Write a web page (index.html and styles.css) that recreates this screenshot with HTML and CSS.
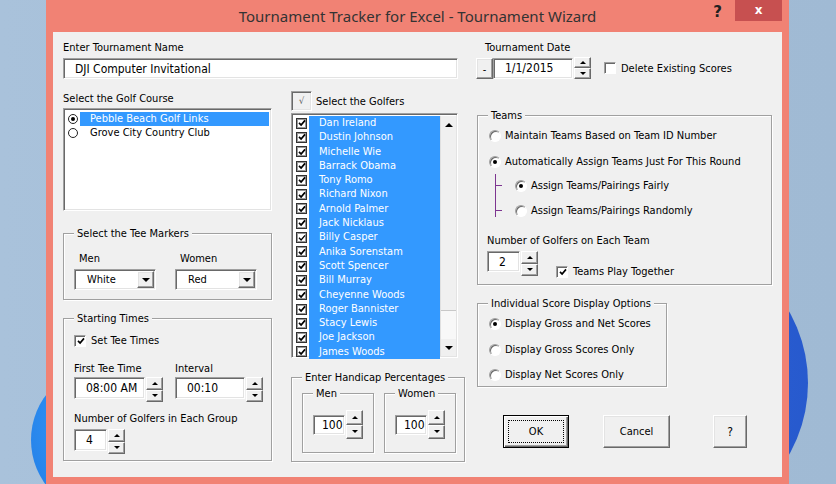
FILE: index.html
```html
<!DOCTYPE html>
<html lang="en">
<head>
  <meta charset="UTF-8" />
  <title>Tournament Wizard</title>
  <link rel="stylesheet" href="styles.css">
</head>
<body>
  <div class="desktop">
    <div class="orb orb-left"></div>
    <div class="orb orb-right"></div>

    <div class="window">
      <div class="titlebar">
        <span class="title">Tournament Tracker for Excel - Tournament Wizard</span>
        <div class="title-controls">
          <span class="title-help">?</span>
          <span class="title-close">x</span>
        </div>
      </div>

      <div class="client">
        <div class="top-row">
          <div class="name-block">
            <div class="label">Enter Tournament Name</div>
            <div class="textbox name-box">DJI Computer Invitational</div>
          </div>
          <div class="date-block">
            <div class="label date-label">Tournament Date</div>
            <div class="date-row">
              <div class="raised dash-btn">-</div>
              <div class="textbox date-box">1/1/2015</div>
              <div class="spin date-spin"><span class="up"></span><span class="down"></span></div>
              <div class="check date-check"><span class="box"></span><span class="label">Delete Existing Scores</span></div>
            </div>
          </div>
        </div>

        <div class="main">
          <!-- left column -->
          <div class="col col-left">
            <div class="label course-label">Select the Golf Course</div>
            <div class="sunken course-list">
              <div class="course-item"><span class="dot-radio on"></span><span class="course-name selected">Pebble Beach Golf Links</span></div>
              <div class="course-item"><span class="dot-radio"></span><span class="course-name">Grove City Country Club</span></div>
            </div>

            <div class="group tee-group">
              <span class="legend">Select the Tee Markers</span>
              <div class="tee-row">
                <div class="tee-col">
                  <div class="label tee-label">Men</div>
                  <div class="textbox combo">White<span class="raised combo-btn"></span></div>
                </div>
                <div class="tee-col">
                  <div class="label tee-label">Women</div>
                  <div class="textbox combo">Red<span class="raised combo-btn"></span></div>
                </div>
              </div>
            </div>

            <div class="group start-group">
              <span class="legend">Starting Times</span>
              <div class="check tee-check"><span class="box"><svg viewBox="0 0 8 8" width="8" height="8"><path d="M1 3.8 L3.1 6 L7 1.4" fill="none" stroke="#000" stroke-width="1.7"/></svg></span><span class="label">Set Tee Times</span></div>
              <div class="time-row">
                <div class="time-col">
                  <div class="label">First Tee Time</div>
                  <div class="field-row">
                    <div class="textbox time-box">08:00 AM</div>
                    <div class="spin"><span class="up"></span><span class="down"></span></div>
                  </div>
                </div>
                <div class="time-col interval-col">
                  <div class="label">Interval</div>
                  <div class="field-row">
                    <div class="textbox interval-box">00:10</div>
                    <div class="spin"><span class="up"></span><span class="down"></span></div>
                  </div>
                </div>
              </div>
              <div class="label group-size-label">Number of Golfers in Each Group</div>
              <div class="field-row group-size-row">
                <div class="textbox small-box">4</div>
                <div class="spin"><span class="up"></span><span class="down"></span></div>
              </div>
            </div>
          </div>

          <!-- middle column -->
          <div class="col col-mid">
            <div class="golfer-head">
              <div class="sunken all-box">√</div>
              <span class="label">Select the Golfers</span>
            </div>
            <div class="sunken golfer-list">
              <div class="golfer-items">
                <div class="golfer"><span class="flat-check"><svg viewBox="0 0 8 8" width="8" height="8"><path d="M1 3.8 L3.1 6 L7 1.4" fill="none" stroke="#000" stroke-width="1.7"/></svg></span><span class="golfer-name">Dan Ireland</span></div>
                <div class="golfer"><span class="flat-check"><svg viewBox="0 0 8 8" width="8" height="8"><path d="M1 3.8 L3.1 6 L7 1.4" fill="none" stroke="#000" stroke-width="1.7"/></svg></span><span class="golfer-name">Dustin Johnson</span></div>
                <div class="golfer"><span class="flat-check"><svg viewBox="0 0 8 8" width="8" height="8"><path d="M1 3.8 L3.1 6 L7 1.4" fill="none" stroke="#000" stroke-width="1.7"/></svg></span><span class="golfer-name">Michelle Wie</span></div>
                <div class="golfer"><span class="flat-check"><svg viewBox="0 0 8 8" width="8" height="8"><path d="M1 3.8 L3.1 6 L7 1.4" fill="none" stroke="#000" stroke-width="1.7"/></svg></span><span class="golfer-name">Barrack Obama</span></div>
                <div class="golfer"><span class="flat-check"><svg viewBox="0 0 8 8" width="8" height="8"><path d="M1 3.8 L3.1 6 L7 1.4" fill="none" stroke="#000" stroke-width="1.7"/></svg></span><span class="golfer-name">Tony Romo</span></div>
                <div class="golfer"><span class="flat-check"><svg viewBox="0 0 8 8" width="8" height="8"><path d="M1 3.8 L3.1 6 L7 1.4" fill="none" stroke="#000" stroke-width="1.7"/></svg></span><span class="golfer-name">Richard Nixon</span></div>
                <div class="golfer"><span class="flat-check"><svg viewBox="0 0 8 8" width="8" height="8"><path d="M1 3.8 L3.1 6 L7 1.4" fill="none" stroke="#000" stroke-width="1.7"/></svg></span><span class="golfer-name">Arnold Palmer</span></div>
                <div class="golfer"><span class="flat-check"><svg viewBox="0 0 8 8" width="8" height="8"><path d="M1 3.8 L3.1 6 L7 1.4" fill="none" stroke="#000" stroke-width="1.7"/></svg></span><span class="golfer-name">Jack Nicklaus</span></div>
                <div class="golfer"><span class="flat-check"><svg viewBox="0 0 8 8" width="8" height="8"><path d="M1 3.8 L3.1 6 L7 1.4" fill="none" stroke="#000" stroke-width="1.3"/></svg></span><span class="golfer-name">Billy Casper</span></div>
                <div class="golfer"><span class="flat-check"><svg viewBox="0 0 8 8" width="8" height="8"><path d="M1 3.8 L3.1 6 L7 1.4" fill="none" stroke="#000" stroke-width="1.7"/></svg></span><span class="golfer-name">Anika Sorenstam</span></div>
                <div class="golfer"><span class="flat-check"><svg viewBox="0 0 8 8" width="8" height="8"><path d="M1 3.8 L3.1 6 L7 1.4" fill="none" stroke="#000" stroke-width="1.7"/></svg></span><span class="golfer-name">Scott Spencer</span></div>
                <div class="golfer"><span class="flat-check"><svg viewBox="0 0 8 8" width="8" height="8"><path d="M1 3.8 L3.1 6 L7 1.4" fill="none" stroke="#000" stroke-width="1.7"/></svg></span><span class="golfer-name">Bill Murray</span></div>
                <div class="golfer"><span class="flat-check"><svg viewBox="0 0 8 8" width="8" height="8"><path d="M1 3.8 L3.1 6 L7 1.4" fill="none" stroke="#000" stroke-width="1.7"/></svg></span><span class="golfer-name">Cheyenne Woods</span></div>
                <div class="golfer"><span class="flat-check"><svg viewBox="0 0 8 8" width="8" height="8"><path d="M1 3.8 L3.1 6 L7 1.4" fill="none" stroke="#000" stroke-width="1.7"/></svg></span><span class="golfer-name">Roger Bannister</span></div>
                <div class="golfer"><span class="flat-check"><svg viewBox="0 0 8 8" width="8" height="8"><path d="M1 3.8 L3.1 6 L7 1.4" fill="none" stroke="#000" stroke-width="1.7"/></svg></span><span class="golfer-name">Stacy Lewis</span></div>
                <div class="golfer"><span class="flat-check"><svg viewBox="0 0 8 8" width="8" height="8"><path d="M1 3.8 L3.1 6 L7 1.4" fill="none" stroke="#000" stroke-width="1.7"/></svg></span><span class="golfer-name">Joe Jackson</span></div>
                <div class="golfer"><span class="flat-check"><svg viewBox="0 0 8 8" width="8" height="8"><path d="M1 3.8 L3.1 6 L7 1.4" fill="none" stroke="#000" stroke-width="1.7"/></svg></span><span class="golfer-name">James Woods</span></div>
              </div>
              <div class="scrollbar">
                <span class="sb-btn sb-up"></span>
                <span class="sb-thumb"></span>
                <span class="sb-track"></span>
                <span class="sb-btn sb-down"></span>
              </div>
            </div>

            <div class="group hc-group">
              <span class="legend">Enter Handicap Percentages</span>
              <div class="hc-row">
                <div class="group hc-sub">
                  <span class="legend">Men</span>
                  <div class="field-row hc-field">
                    <div class="textbox hc-box">100</div>
                    <div class="spin tall-spin"><span class="up"></span><span class="down"></span></div>
                  </div>
                </div>
                <div class="group hc-sub">
                  <span class="legend">Women</span>
                  <div class="field-row hc-field">
                    <div class="textbox hc-box">100</div>
                    <div class="spin tall-spin"><span class="up"></span><span class="down"></span></div>
                  </div>
                </div>
              </div>
            </div>
          </div>

          <!-- right column -->
          <div class="col col-right">
            <div class="group teams-group">
              <span class="legend">Teams</span>
              <div class="opt first-opt"><span class="radio"></span><span class="label">Maintain Teams Based on Team ID Number</span></div>
              <div class="opt"><span class="radio on"></span><span class="label">Automatically Assign Teams Just For This Round</span></div>
              <div class="sub-opts">
                <div class="opt sub-opt"><span class="radio on"></span><span class="label">Assign Teams/Pairings Fairly</span></div>
                <div class="opt sub-opt"><span class="radio"></span><span class="label">Assign Teams/Pairings Randomly</span></div>
              </div>
              <div class="label team-size-label">Number of Golfers on Each Team</div>
              <div class="field-row team-size-row">
                <div class="textbox small-box">2</div>
                <div class="spin"><span class="up"></span><span class="down"></span></div>
                <div class="check together-check"><span class="box"><svg viewBox="0 0 8 8" width="8" height="8"><path d="M1 3.8 L3.1 6 L7 1.4" fill="none" stroke="#000" stroke-width="1.7"/></svg></span><span class="label">Teams Play Together</span></div>
              </div>
            </div>

            <div class="group score-group">
              <span class="legend">Individual Score Display Options</span>
              <div class="opt first-opt"><span class="radio on"></span><span class="label">Display Gross and Net Scores</span></div>
              <div class="opt"><span class="radio"></span><span class="label">Display Gross Scores Only</span></div>
              <div class="opt"><span class="radio"></span><span class="label">Display Net Scores Only</span></div>
            </div>

            <div class="button-row">
              <div class="btn default-btn"><span class="focus">OK</span></div>
              <div class="btn cancel-btn">Cancel</div>
              <div class="btn help-btn">?</div>
            </div>
          </div>
        </div>
      </div>
    </div>
  </div>
</body>
</html>
```

FILE: styles.css
```css
* {
  box-sizing: border-box;
}

body {
  margin: 0;
  font-family: "DejaVu Sans Condensed", "DejaVu Sans", sans-serif;
  font-size: 11px;
  color: #000;
}

.desktop {
  position: relative;
  width: 836px;
  height: 484px;
  overflow: hidden;
  background: linear-gradient(90deg, #a9c2db 0%, #a3bdd7 50%, #a0bad4 100%);
}

.orb {
  position: absolute;
  border-radius: 50%;
}

.orb-left {
  left: 31px;
  top: 365px;
  width: 150px;
  height: 150px;
  background: radial-gradient(circle at 60% 40%, #55adf8 0%, #2b8bef 60%, #1f78e2 100%);
}

.orb-right {
  left: 516px;
  top: 237px;
  width: 292px;
  height: 292px;
  background: radial-gradient(circle, #2d62d6 0%, #2658cc 86%, #1c46ad 93%, #2152c4 100%);
}

/* window frame */
.window {
  position: absolute;
  left: 46px;
  top: 0;
  width: 743px;
  height: 484px;
  background: #f18274;
  padding: 0 7px 7px;
}

.titlebar {
  height: 32px;
  display: grid;
  grid-template-columns: 1fr auto 1fr;
  align-items: start;
}

.title {
  grid-column: 2;
  font-family: "Noto Sans", "Open Sans", sans-serif;
  font-size: 15px;
  line-height: 32px;
  color: #333;
  white-space: nowrap;
}

.title-controls {
  grid-column: 3;
  justify-self: end;
  display: flex;
  align-items: flex-start;
}

.title-help {
  font-family: "DejaVu Sans", sans-serif;
  font-weight: bold;
  font-size: 15px;
  line-height: 24px;
  color: #222;
  margin-right: 13px;
}

.title-close {
  width: 47px;
  height: 21px;
  background: #c75050;
  color: #fff;
  text-align: center;
  font-family: "DejaVu Sans", sans-serif;
  font-weight: bold;
  font-size: 12px;
  line-height: 20px;
}

/* client area */
.client {
  height: 445px;
  background: #f0f0f0;
  padding: 9px 10px 0;
}

.label {
  line-height: 13px;
  white-space: nowrap;
}

.sunken,
.textbox {
  background: #fff;
  border: 1px solid;
  border-color: #a0a0a0 #fff #fff #a0a0a0;
  box-shadow: inset 1px 1px 0 #696969, inset -1px -1px 0 #e3e3e3;
}

.raised {
  background: #f0f0f0;
  border: 1px solid;
  border-color: #fff #696969 #696969 #fff;
  box-shadow: inset -1px -1px 0 #a0a0a0, inset 1px 1px 0 #e3e3e3;
}

.textbox {
  display: flex;
  align-items: center;
  padding-left: 11px;
  font-size: 12px;
  white-space: nowrap;
}

/* top row */
.top-row {
  display: flex;
  align-items: flex-start;
}

.name-block {
  width: 395px;
}

.name-box {
  margin-top: 4px;
  height: 21px;
}

.date-block {
  margin-left: 18px;
}

.date-label {
  padding-left: 9px;
}

.date-row {
  display: flex;
  align-items: center;
  margin-top: 3px;
}

.dash-btn {
  width: 17px;
  height: 21px;
  display: flex;
  align-items: center;
  justify-content: center;
  font-size: 11px;
  padding-top: 3px;
}

.date-box {
  width: 80px;
  height: 21px;
}

.date-spin {
  height: 22px !important;
}

.date-check {
  margin-left: 13px;
}

/* spinners */
.spin {
  display: flex;
  flex-direction: column;
  width: 17px;
  height: 25px;
  margin-left: 1px;
}

.spin span {
  flex: 1;
  display: flex;
  align-items: center;
  justify-content: center;
  background: #f0f0f0;
  border: 1px solid;
  border-color: #fff #696969 #696969 #fff;
  box-shadow: inset -1px -1px 0 #a0a0a0;
}

.spin .up::after {
  content: "";
  border-left: 3px solid transparent;
  border-right: 3px solid transparent;
  border-bottom: 3px solid #000;
}

.spin .down::after {
  content: "";
  border-left: 3px solid transparent;
  border-right: 3px solid transparent;
  border-top: 3px solid #000;
}

.tall-spin {
  height: 29px;
}

.field-row {
  display: flex;
  align-items: flex-start;
}

/* 3d checkbox */
.check {
  display: flex;
  align-items: center;
}

.check .box {
  width: 12px;
  height: 12px;
  background: #fff;
  border: 1px solid;
  border-color: #a0a0a0 #fff #fff #a0a0a0;
  box-shadow: inset 1px 1px 0 #696969;
  display: flex;
  align-items: center;
  justify-content: center;
  padding: 1px 0 0 1px;
}

.check .label {
  margin-left: 5px;
}

/* group boxes */
.group {
  border: 1px solid #a0a0a0;
  box-shadow: inset 1px 1px 0 #fff, 1px 1px 0 #fff;
  padding: 0 10px;
}

.legend {
  display: block;
  width: fit-content;
  margin-top: -7px;
  padding: 0 3px;
  background: #f0f0f0;
  line-height: 13px;
  white-space: nowrap;
}

.main {
  display: flex;
  align-items: flex-start;
  margin-top: 12px;
}

/* left column */
.col-left {
  width: 209px;
}

.course-label {
  margin-top: 1px;
}

.course-list {
  margin-top: 3px;
  height: 103px;
  padding: 3px 2px 0 4px;
}

.course-item {
  display: flex;
  align-items: center;
  height: 14px;
}

.dot-radio {
  width: 10px;
  height: 10px;
  border: 1px solid #222;
  border-radius: 50%;
  background: #fff;
  display: flex;
  align-items: center;
  justify-content: center;
}

.dot-radio.on::after {
  content: "";
  width: 4px;
  height: 4px;
  border-radius: 50%;
  background: #000;
}

.course-name {
  flex: 1;
  margin-left: 2px;
  padding-left: 10px;
  line-height: 14px;
  white-space: nowrap;
}

.course-name.selected {
  background: #3399ff;
  color: #fff;
}

.tee-group {
  margin-top: 22px;
  padding-bottom: 9px;
}

.tee-row {
  display: flex;
  margin-top: 12px;
}

.tee-col {
  width: 82px;
}

.tee-col + .tee-col {
  margin-left: 19px;
}

.tee-label {
  padding-left: 5px;
}

.combo {
  margin-top: 4px;
  height: 21px;
  padding-left: 12px;
  padding-right: 1px;
  font-size: 11px;
}

.combo-btn {
  margin-left: auto;
  width: 17px;
  height: 17px;
  display: flex;
  align-items: center;
  justify-content: center;
}

.combo-btn::after {
  content: "";
  border-left: 4px solid transparent;
  border-right: 4px solid transparent;
  border-top: 4px solid #000;
}

.start-group {
  margin-top: 18px;
  padding-bottom: 6px;
}

.tee-check {
  margin-top: 9px;
}

.time-row {
  display: flex;
  margin-top: 15px;
}

.time-col .field-row {
  margin-top: 2px;
}

.interval-col {
  margin-left: 12px;
}

.time-box {
  width: 71px;
  height: 22px;
}

.interval-box {
  width: 70px;
  height: 22px;
}

.group-size-label {
  margin-top: 10px;
}

.group-size-row {
  margin-top: 4px;
}

.small-box {
  width: 33px;
  height: 22px;
}

/* middle column */
.col-mid {
  width: 174px;
  margin-left: 19px;
}

.golfer-head {
  display: flex;
  align-items: center;
  height: 20px;
}

.all-box {
  width: 21px;
  height: 20px;
  display: flex;
  align-items: center;
  justify-content: center;
  font-size: 9px;
  color: #555;
  background: #f0f0f0;
}

.golfer-head .label {
  margin-left: 4px;
}

.golfer-list {
  margin-top: 2px;
  width: 167px;
  height: 245px;
  display: flex;
  padding: 2px 1px 1px 2px;
}

.golfer-items {
  flex: 1;
}

.golfer {
  display: flex;
  align-items: center;
  height: 14.3px;
}

.flat-check {
  width: 11px;
  height: 11px;
  margin-left: 2px;
  border: 1px solid #333;
  box-shadow: inset 0 0 0 1px #9a9a9a;
  background: #fff;
  display: flex;
  align-items: center;
  justify-content: center;
}

.golfer-name {
  flex: 1;
  height: 100%;
  margin-left: 2px;
  padding-left: 10px;
  background: #3399ff;
  color: #fff;
  line-height: 14.3px;
  white-space: nowrap;
}

.scrollbar {
  width: 16px;
  display: flex;
  flex-direction: column;
  background: #f0f0f0;
  border-left: 1px solid #e0e0e0;
}

.sb-btn {
  height: 17px;
  display: flex;
  align-items: center;
  justify-content: center;
}

.sb-up::after {
  content: "";
  border-left: 4px solid transparent;
  border-right: 4px solid transparent;
  border-bottom: 4px solid #000;
}

.sb-down::after {
  content: "";
  border-left: 4px solid transparent;
  border-right: 4px solid transparent;
  border-top: 4px solid #000;
}

.sb-thumb {
  height: 178px;
  border-bottom: 1px solid #c8c8c8;
}

.sb-track {
  flex: 1;
  background: #f8f8f8;
}

.hc-group {
  margin-top: 19px;
  padding-bottom: 8px;
}

.hc-row {
  display: flex;
  margin-top: 9px;
}

.hc-sub {
  width: 74px;
  padding-bottom: 13px;
}

.hc-sub + .hc-sub {
  margin-left: 10px;
}

.hc-field {
  margin-top: 10px;
  align-items: center;
}

.hc-box {
  width: 32px;
  height: 20px;
  padding-left: 8px;
}

/* right column */
.col-right {
  width: 295px;
  margin-left: 12px;
}

.opt {
  display: flex;
  align-items: center;
  margin-top: 13px;
}

.first-opt {
  margin-top: 7px;
}

.radio {
  width: 12px;
  height: 12px;
  margin-left: 1px;
  margin-right: 4px;
  border-radius: 50%;
  background: #fff;
  border: 1px solid;
  border-color: #a0a0a0 #fff #fff #a0a0a0;
  box-shadow: inset 1px 1px 0 #696969;
  display: flex;
  align-items: center;
  justify-content: center;
}

.radio.on::after {
  content: "";
  width: 4px;
  height: 4px;
  border-radius: 50%;
  background: #000;
}

.teams-group {
  margin-top: 24px;
  padding-bottom: 6px;
}

.sub-opts {
  margin-top: 6px;
  margin-left: 7px;
  padding-top: 5px;
  border-left: 1px solid #7d3590;
}

.sub-opt {
  margin-top: 12px;
}

.sub-opt:first-child {
  margin-top: 0;
}

.sub-opt::before {
  content: "";
  width: 6px;
  height: 1px;
  background: #7d3590;
  margin-right: 13px;
}

.sub-opt .radio {
  margin-left: 0;
}

.team-size-label {
  margin-top: 17px;
  margin-left: -1px;
}

.team-size-row {
  margin-top: 4px;
  margin-left: -1px;
}

.team-size-row .small-box {
  height: 21px;
}

.together-check {
  margin-top: 14px;
  margin-left: 18px;
}

.score-group {
  width: 190px;
  margin-top: 18px;
  padding-bottom: 5px;
}

.score-group .opt + .opt + .opt {
  margin-top: 12px;
}

.button-row {
  display: flex;
  margin-top: 28px;
  padding-left: 26px;
}

.btn {
  height: 33px;
  display: flex;
  align-items: center;
  justify-content: center;
  background: #f0f0f0;
  border: 1px solid;
  border-color: #fff #696969 #696969 #fff;
  box-shadow: inset -1px -1px 0 #a0a0a0, inset 1px 1px 0 #e3e3e3;
}

.default-btn {
  width: 66px;
  border: 1px solid #000;
  box-shadow: inset 1px 1px 0 #fff, inset -1px -1px 0 #696969, inset -2px -2px 0 #a0a0a0;
  padding: 4px;
}

.focus {
  flex: 1;
  align-self: stretch;
  display: flex;
  align-items: center;
  justify-content: center;
  border: 1px dotted #000;
}

.cancel-btn {
  width: 67px;
  margin-left: 34px;
}

.help-btn {
  width: 34px;
  margin-left: 43px;
  font-size: 12px;
}
```
